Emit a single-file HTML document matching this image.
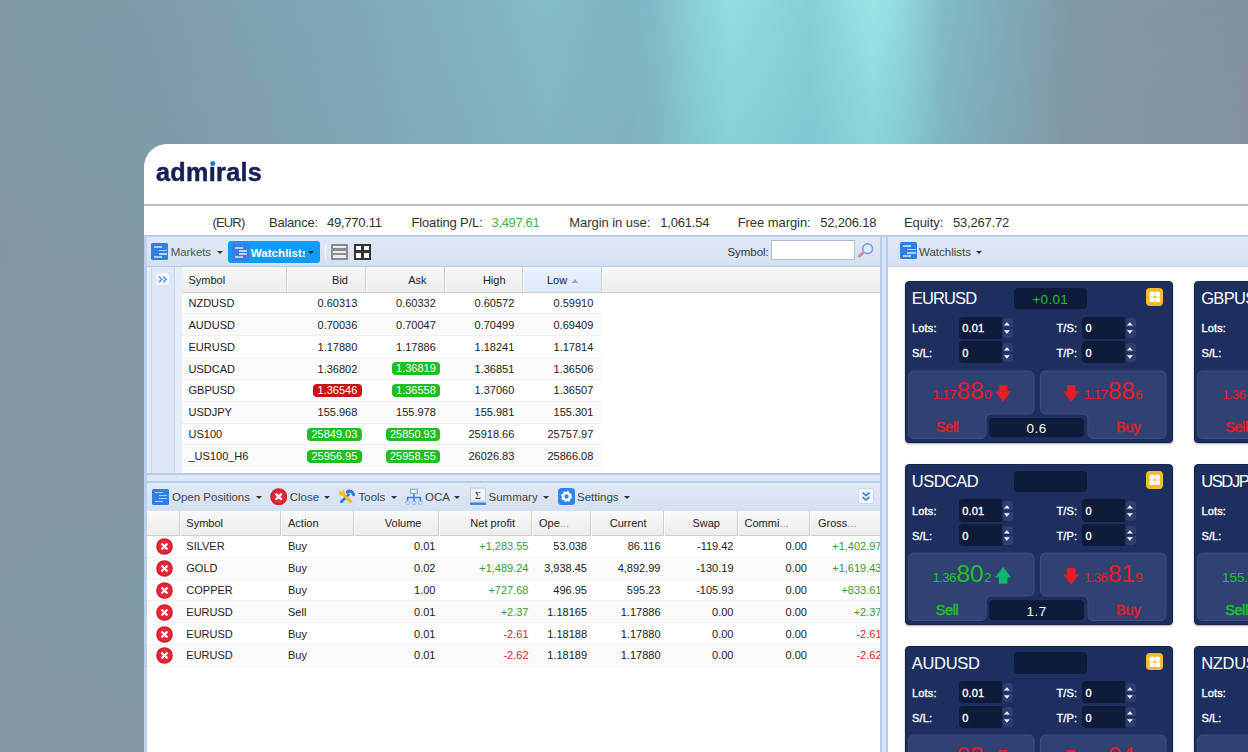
<!DOCTYPE html><html><head><meta charset="utf-8"><title>admirals</title><style>
*{box-sizing:border-box;margin:0;padding:0}
html,body{width:1248px;height:752px;overflow:hidden}
body{position:relative;font-family:"Liberation Sans",Arial,sans-serif;font-size:11px;color:#222;
background:#8098a5}
.abs,.abs *{position:absolute}
.bg{position:absolute;left:0;top:0;width:1248px;height:752px;
background:linear-gradient(90deg,#7f97a5 0px,#7f9dab 150px,#7fa6b5 330px,#82b3c0 470px,#85bcc8 545px,#81b7c4 600px,#80b6c3 630px,#82bcc8 656px,#8bd3d9 698px,#93dee1 729px,#8dd8dc 770px,#86d0d6 810px,#92dde0 845px,#9ae5e6 874px,#93dadf 900px,#82bcc7 944px,#80aebb 990px,#7fa6b3 1024px,#8199a6 1074px,#8395a2 1150px,#83929e 1248px);}
.bgb{position:absolute;left:0;top:0;width:1248px;height:752px;-webkit-mask-image:linear-gradient(180deg,rgba(0,0,0,0) 0px,rgba(0,0,0,1) 150px);mask-image:linear-gradient(180deg,rgba(0,0,0,0) 0px,rgba(0,0,0,1) 150px);
background:linear-gradient(90deg,#8096a3 0px,#7f9aa8 150px,#7fa3b1 330px,#80aebb 470px,#82b5c1 545px,#80b2bf 600px,#7fb1be 630px,#80b6c2 656px,#82c8cf 698px,#85d1d6 729px,#82cdd3 770px,#7fc8cf 810px,#84cfd5 845px,#88d4d9 874px,#84ccd3 900px,#7eb4c0 944px,#7ea8b5 990px,#7fa1ae 1024px,#8197a4 1074px,#8394a0 1150px,#84929e 1248px);}
.bg2{position:absolute;left:0;top:144px;width:400px;height:608px;background:linear-gradient(180deg,rgba(131,148,158,.0) 0px,rgba(131,148,158,.6) 170px,rgba(131,148,158,.6) 330px,rgba(129,151,163,.45) 450px,rgba(131,148,157,.6) 608px)}
.win{position:absolute;left:144px;top:144px;width:1110px;height:620px;background:#fff;border-top-left-radius:23px;overflow:hidden}
.t{position:absolute;white-space:nowrap;line-height:1}
</style></head><body>
<div class="bg"></div><div class="bgb"></div><div class="bg2"></div>
<div class="win" id="win">
<div class="t" style="left:11.5px;top:16px;font-size:25px;color:#171f55;font-weight:bold;letter-spacing:0.35px;-webkit-text-stroke:0.5px #171f55;transform-origin:0 0;transform:scaleX(1.005)">adm<span style="position:relative">ı<span style="position:absolute;left:1.7px;top:2.6px;width:5.2px;height:5.2px;border-radius:50%;background:#1f74ea"></span></span>rals</div>
<div class="" style="position:absolute;left:0.0px;top:60.2px;width:1110.0px;height:1.7px;background:#bfbfbf"></div>
<div class="t" style="left:68.5px;top:71.5px;font-size:13px;color:#333;letter-spacing:-0.842px">(EUR)</div>
<div class="t" style="left:125.0px;top:71.5px;font-size:13px;color:#333;letter-spacing:-0.224px">Balance:</div>
<div class="t" style="left:182.9px;top:71.5px;font-size:13px;color:#333;letter-spacing:-0.219px">49,770.11</div>
<div class="t" style="left:267.4px;top:71.5px;font-size:13px;color:#333;letter-spacing:-0.130px">Floating P/L:</div>
<div class="t" style="left:347.5px;top:71.5px;font-size:13px;color:#3db54a;letter-spacing:-0.351px">3,497.61</div>
<div class="t" style="left:425.2px;top:71.5px;font-size:13px;color:#333;letter-spacing:-0.040px">Margin in use:</div>
<div class="t" style="left:516.3px;top:71.5px;font-size:13px;color:#333;letter-spacing:-0.201px">1,061.54</div>
<div class="t" style="left:593.7px;top:71.5px;font-size:13px;color:#333;letter-spacing:-0.066px">Free margin:</div>
<div class="t" style="left:676.2px;top:71.5px;font-size:13px;color:#333;letter-spacing:-0.193px">52,206.18</div>
<div class="t" style="left:759.9px;top:71.5px;font-size:13px;color:#333;letter-spacing:-0.049px">Equity:</div>
<div class="t" style="left:808.9px;top:71.5px;font-size:13px;color:#333;letter-spacing:-0.193px">53,267.72</div>
<div class="" style="position:absolute;left:0.0px;top:91.0px;width:744.0px;height:520.0px;background:#e5edf9"></div>
<div class="" style="position:absolute;left:0.0px;top:91.0px;width:1110.0px;height:2.0px;background:#b4cdee"></div>
<div class="" style="position:absolute;left:0.0px;top:93.0px;width:2.5px;height:520.0px;background:#bdd1ee"></div>
<div class="" style="position:absolute;left:735.5px;top:93.0px;width:2.5px;height:520.0px;background:#b4cdee"></div>
<div class="" style="position:absolute;left:738.0px;top:93.0px;width:4.0px;height:520.0px;background:#dce7f6"></div>
<div class="" style="position:absolute;left:742.0px;top:93.0px;width:2.0px;height:520.0px;background:#b4cdee"></div>
<div class="" style="position:absolute;left:3.0px;top:93.0px;width:732.5px;height:28.5px;background:linear-gradient(180deg,#e0e9f6 0%,#d4e0f1 100%)"></div>
<div class="" style="position:absolute;left:3.0px;top:121.5px;width:732.5px;height:1.5px;background:#b4cdee"></div>
<div class="" style="position:absolute;left:7.4px;top:99.3px;width:17.0px;height:17.0px;background:#2f7fe4;border-radius:1.5px"><div style="position:absolute;left:3.0px;top:3.2px;width:8.0px;height:1.7px;background:rgba(255,255,255,.62)"></div><div style="position:absolute;left:7.2px;top:6.4px;width:8.4px;height:1.7px;background:rgba(255,255,255,.62)"></div><div style="position:absolute;left:7.2px;top:9.6px;width:8.4px;height:1.7px;background:rgba(255,255,255,.62)"></div><div style="position:absolute;left:3.0px;top:12.8px;width:8.0px;height:1.7px;background:rgba(255,255,255,.62)"></div></div>
<div class="t" style="left:26.8px;top:102.8px;font-size:11.5px;color:#555;letter-spacing:-0.100px">Markets</div>
<div class="" style="position:absolute;left:72.5px;top:107.0px;width:0.0px;height:0.0px;border-left:3px solid transparent;border-right:3px solid transparent;border-top:3.5px solid #333;width:0;height:0"></div>
<div class="" style="position:absolute;left:84.0px;top:96.5px;width:91.5px;height:22.5px;background:#109bf6;border-radius:3px"></div>
<div class="" style="position:absolute;left:88.0px;top:100.0px;width:16.5px;height:16.5px;background:#3b7ee2;border-radius:1.5px"><div style="position:absolute;left:2.9px;top:3.1px;width:7.8px;height:1.6px;background:rgba(255,255,255,.62)"></div><div style="position:absolute;left:7.0px;top:6.2px;width:8.2px;height:1.6px;background:rgba(255,255,255,.62)"></div><div style="position:absolute;left:7.0px;top:9.3px;width:8.2px;height:1.6px;background:rgba(255,255,255,.62)"></div><div style="position:absolute;left:2.9px;top:12.4px;width:7.8px;height:1.6px;background:rgba(255,255,255,.62)"></div></div>
<div class="t" style="left:106.80000000000001px;top:103px;width:54.3px;overflow:hidden;font-size:11.6px;font-weight:bold;color:#fff">Watchlists</div>
<div class="" style="position:absolute;left:163.5px;top:107.0px;width:0.0px;height:0.0px;border-left:3px solid transparent;border-right:3px solid transparent;border-top:3.5px solid #1b2a4a;width:0;height:0"></div>
<div class="" style="position:absolute;left:180.5px;top:100.0px;width:1.0px;height:16.0px;background:#f4f8fd"></div>
<div class="" style="position:absolute;left:186.5px;top:99.8px;width:17.0px;height:16.0px;border:2.2px solid #8c8c8c;background:#e9edf2"><div style="position:absolute;left:0;right:0;top:2.6px;height:2.2px;background:#8c8c8c"></div><div style="position:absolute;left:0;right:0;top:7.2px;height:2.2px;background:#8c8c8c"></div></div>
<div class="" style="position:absolute;left:210.3px;top:99.8px;width:17.0px;height:16.0px;border:2.4px solid #343434;background:#fff"><div style="position:absolute;left:4.9px;top:0;bottom:0;width:2.4px;background:#343434"></div><div style="position:absolute;left:0;right:0;top:4.4px;height:2.4px;background:#343434"></div></div>
<div class="t" style="left:583.5px;top:102.8px;font-size:11.5px;color:#333;letter-spacing:-0.049px">Symbol:</div>
<div class="" style="position:absolute;left:626.5px;top:96.3px;width:84.0px;height:19.7px;background:#fff;border:1px solid #b4c0d2;border-top-color:#a9b6cb"></div>
<svg style="position:absolute;left:712px;top:97px" width="20" height="19" viewBox="0 0 20 19"><path d="M3.4 15.1 L7 11.9" stroke="#cf8ea3" stroke-width="2.8" stroke-linecap="round"/><circle cx="11.6" cy="7.8" r="4.9" fill="#d6f2fb" stroke="#9097e6" stroke-width="1.7"/></svg>
<div class="" style="position:absolute;left:7.0px;top:123.0px;width:23.5px;height:206.0px;background:#dce6f5;border-left:1.5px solid #c6d7ef;border-right:1.5px solid #c6d7ef"></div>
<div class="" style="position:absolute;left:12.3px;top:128.7px;width:13.0px;height:12.5px;background:#f4f8fd;border-radius:2px"></div>
<svg style="position:absolute;left:14.300000000000011px;top:131.8px" width="10" height="7" viewBox="0 0 10 7"><path d="M0.9 0.6 L3.9 3.4 L0.9 6.2 M5.2 0.6 L8.2 3.4 L5.2 6.2" fill="none" stroke="#6a98d8" stroke-width="1.6"/></svg>
<div class="" style="position:absolute;left:38.0px;top:123.0px;width:697.5px;height:206.0px;background:#fff"></div>
<div class="" style="position:absolute;left:38.0px;top:123.0px;width:697.5px;height:25.5px;background:linear-gradient(180deg,#f9f9f9 0%,#ececec 100%);border-bottom:1px solid #d0d0d0"></div>
<div class="" style="position:absolute;left:379.0px;top:123.0px;width:79.0px;height:25.0px;background:linear-gradient(180deg,#ebf3fd,#d9e8fb)"></div>
<div class="" style="position:absolute;left:142.0px;top:123.0px;width:1.0px;height:25.0px;background:#d0d0d0"></div>
<div class="" style="position:absolute;left:143.0px;top:123.0px;width:1.0px;height:25.0px;background:#fbfbfb"></div>
<div class="" style="position:absolute;left:221.0px;top:123.0px;width:1.0px;height:25.0px;background:#d0d0d0"></div>
<div class="" style="position:absolute;left:222.0px;top:123.0px;width:1.0px;height:25.0px;background:#fbfbfb"></div>
<div class="" style="position:absolute;left:299.5px;top:123.0px;width:1.0px;height:25.0px;background:#d0d0d0"></div>
<div class="" style="position:absolute;left:300.5px;top:123.0px;width:1.0px;height:25.0px;background:#fbfbfb"></div>
<div class="" style="position:absolute;left:378.0px;top:123.0px;width:1.0px;height:25.0px;background:#d0d0d0"></div>
<div class="" style="position:absolute;left:379.0px;top:123.0px;width:1.0px;height:25.0px;background:#fbfbfb"></div>
<div class="" style="position:absolute;left:457.0px;top:123.0px;width:1.0px;height:25.0px;background:#d0d0d0"></div>
<div class="" style="position:absolute;left:458.0px;top:123.0px;width:1.0px;height:25.0px;background:#fbfbfb"></div>
<div class="t" style="left:44.5px;top:130.5px;font-size:11px;color:#222;">Symbol</div>
<div class="t" style="right:906.0px;top:130.5px;font-size:11px;color:#222;">Bid</div>
<div class="t" style="right:827.5px;top:130.5px;font-size:11px;color:#222;">Ask</div>
<div class="t" style="right:748.5px;top:130.5px;font-size:11px;color:#222;">High</div>
<div class="t" style="left:403.0px;top:130.5px;font-size:11px;color:#222;">Low</div>
<div class="" style="position:absolute;left:427.5px;top:135.0px;width:0.0px;height:0.0px;border-left:3.5px solid transparent;border-right:3.5px solid transparent;border-bottom:4px solid #8fa6c9;width:0;height:0"></div>
<div class="" style="position:absolute;left:38.0px;top:148.5px;width:420.0px;height:21.9px;background:#fff;border-bottom:1px solid #f0f0f0"></div>
<div class="t" style="left:44.5px;top:154.0px;font-size:11px;color:#222;">NZDUSD</div>
<div class="t" style="right:896.7px;top:154.0px;font-size:11px;color:#222;">0.60313</div>
<div class="t" style="right:818.2px;top:154.0px;font-size:11px;color:#222;">0.60332</div>
<div class="t" style="right:739.7px;top:154.0px;font-size:11px;color:#222;">0.60572</div>
<div class="t" style="right:660.7px;top:154.0px;font-size:11px;color:#222;">0.59910</div>
<div class="" style="position:absolute;left:38.0px;top:170.4px;width:420.0px;height:21.9px;background:#fafafa;border-bottom:1px solid #f0f0f0"></div>
<div class="t" style="left:44.5px;top:175.9px;font-size:11px;color:#222;">AUDUSD</div>
<div class="t" style="right:896.7px;top:175.9px;font-size:11px;color:#222;">0.70036</div>
<div class="t" style="right:818.2px;top:175.9px;font-size:11px;color:#222;">0.70047</div>
<div class="t" style="right:739.7px;top:175.9px;font-size:11px;color:#222;">0.70499</div>
<div class="t" style="right:660.7px;top:175.9px;font-size:11px;color:#222;">0.69409</div>
<div class="" style="position:absolute;left:38.0px;top:192.2px;width:420.0px;height:21.9px;background:#fff;border-bottom:1px solid #f0f0f0"></div>
<div class="t" style="left:44.5px;top:197.7px;font-size:11px;color:#222;">EURUSD</div>
<div class="t" style="right:896.7px;top:197.7px;font-size:11px;color:#222;">1.17880</div>
<div class="t" style="right:818.2px;top:197.7px;font-size:11px;color:#222;">1.17886</div>
<div class="t" style="right:739.7px;top:197.7px;font-size:11px;color:#222;">1.18241</div>
<div class="t" style="right:660.7px;top:197.7px;font-size:11px;color:#222;">1.17814</div>
<div class="" style="position:absolute;left:38.0px;top:214.1px;width:420.0px;height:21.9px;background:#fafafa;border-bottom:1px solid #f0f0f0"></div>
<div class="t" style="left:44.5px;top:219.6px;font-size:11px;color:#222;">USDCAD</div>
<div class="t" style="right:896.7px;top:219.6px;font-size:11px;color:#222;">1.36802</div>
<div class="t" style="right:814.0px;top:218.2px;font-size:11px;color:#fff;background:#21be21;border-radius:4px;padding:1px 4.2px 1px 4.2px;height:13px">1.36819</div>
<div class="t" style="right:739.7px;top:219.6px;font-size:11px;color:#222;">1.36851</div>
<div class="t" style="right:660.7px;top:219.6px;font-size:11px;color:#222;">1.36506</div>
<div class="" style="position:absolute;left:38.0px;top:235.9px;width:420.0px;height:21.9px;background:#fff;border-bottom:1px solid #f0f0f0"></div>
<div class="t" style="left:44.5px;top:241.4px;font-size:11px;color:#222;">GBPUSD</div>
<div class="t" style="right:892.5px;top:240.1px;font-size:11px;color:#fff;background:#c41616;border-radius:4px;padding:1px 4.2px 1px 4.2px;height:13px">1.36546</div>
<div class="t" style="right:814.0px;top:240.1px;font-size:11px;color:#fff;background:#21be21;border-radius:4px;padding:1px 4.2px 1px 4.2px;height:13px">1.36558</div>
<div class="t" style="right:739.7px;top:241.4px;font-size:11px;color:#222;">1.37060</div>
<div class="t" style="right:660.7px;top:241.4px;font-size:11px;color:#222;">1.36507</div>
<div class="" style="position:absolute;left:38.0px;top:257.8px;width:420.0px;height:21.9px;background:#fafafa;border-bottom:1px solid #f0f0f0"></div>
<div class="t" style="left:44.5px;top:263.2px;font-size:11px;color:#222;">USDJPY</div>
<div class="t" style="right:896.7px;top:263.2px;font-size:11px;color:#222;">155.968</div>
<div class="t" style="right:818.2px;top:263.2px;font-size:11px;color:#222;">155.978</div>
<div class="t" style="right:739.7px;top:263.2px;font-size:11px;color:#222;">155.981</div>
<div class="t" style="right:660.7px;top:263.2px;font-size:11px;color:#222;">155.301</div>
<div class="" style="position:absolute;left:38.0px;top:279.6px;width:420.0px;height:21.9px;background:#fff;border-bottom:1px solid #f0f0f0"></div>
<div class="t" style="left:44.5px;top:285.1px;font-size:11px;color:#222;">US100</div>
<div class="t" style="right:892.5px;top:283.8px;font-size:11px;color:#fff;background:#21be21;border-radius:4px;padding:1px 4.2px 1px 4.2px;height:13px">25849.03</div>
<div class="t" style="right:814.0px;top:283.8px;font-size:11px;color:#fff;background:#21be21;border-radius:4px;padding:1px 4.2px 1px 4.2px;height:13px">25850.93</div>
<div class="t" style="right:739.7px;top:285.1px;font-size:11px;color:#222;">25918.66</div>
<div class="t" style="right:660.7px;top:285.1px;font-size:11px;color:#222;">25757.97</div>
<div class="" style="position:absolute;left:38.0px;top:301.5px;width:420.0px;height:21.9px;background:#fafafa;border-bottom:1px solid #f0f0f0"></div>
<div class="t" style="left:44.5px;top:307.0px;font-size:11px;color:#222;">_US100_H6</div>
<div class="t" style="right:892.5px;top:305.7px;font-size:11px;color:#fff;background:#21be21;border-radius:4px;padding:1px 4.2px 1px 4.2px;height:13px">25956.95</div>
<div class="t" style="right:814.0px;top:305.7px;font-size:11px;color:#fff;background:#21be21;border-radius:4px;padding:1px 4.2px 1px 4.2px;height:13px">25958.55</div>
<div class="t" style="right:739.7px;top:307.0px;font-size:11px;color:#222;">26026.83</div>
<div class="t" style="right:660.7px;top:307.0px;font-size:11px;color:#222;">25866.08</div>
<div class="" style="position:absolute;left:3.0px;top:329.0px;width:732.5px;height:1.5px;background:#b4cdee"></div>
<div class="" style="position:absolute;left:3.0px;top:330.5px;width:732.5px;height:6.0px;background:#dce7f6"></div>
<div class="" style="position:absolute;left:3.0px;top:336.5px;width:732.5px;height:2.0px;background:#b4cdee"></div>
<div class="" style="position:absolute;left:3.0px;top:338.5px;width:732.5px;height:28.0px;background:linear-gradient(180deg,#e0e9f6 0%,#d4e0f1 100%)"></div>
<div class="" style="position:absolute;left:8.0px;top:344.5px;width:16.5px;height:16.5px;background:#2f7fe4;border-radius:1.5px"><div style="position:absolute;left:2.9px;top:3.1px;width:7.8px;height:1.6px;background:rgba(255,255,255,.62)"></div><div style="position:absolute;left:7.0px;top:6.2px;width:8.2px;height:1.6px;background:rgba(255,255,255,.62)"></div><div style="position:absolute;left:7.0px;top:9.3px;width:8.2px;height:1.6px;background:rgba(255,255,255,.62)"></div><div style="position:absolute;left:2.9px;top:12.4px;width:7.8px;height:1.6px;background:rgba(255,255,255,.62)"></div></div>
<div class="t" style="left:28.0px;top:347.5px;font-size:11.5px;color:#444;">Open Positions</div>
<div class="" style="position:absolute;left:111.5px;top:351.5px;width:0.0px;height:0.0px;border-left:3px solid transparent;border-right:3px solid transparent;border-top:3.5px solid #333;width:0;height:0"></div>
<svg style="position:absolute;left:126.0px;top:344.0px" width="17.4" height="17.4" viewBox="0 0 20 20"><circle cx="10" cy="10" r="9.8" fill="#d71f2e"/><circle cx="10" cy="10" r="7.6" fill="#e22b39"/><path d="M7.3 7.3 L12.7 12.7 M12.7 7.3 L7.3 12.7" stroke="#fff" stroke-width="2.7" stroke-linecap="round"/></svg>
<div class="t" style="left:145.7px;top:347.5px;font-size:11.5px;color:#444;">Close</div>
<div class="" style="position:absolute;left:179.5px;top:351.5px;width:0.0px;height:0.0px;border-left:3px solid transparent;border-right:3px solid transparent;border-top:3.5px solid #333;width:0;height:0"></div>
<svg style="position:absolute;left:194px;top:344px" width="17" height="17" viewBox="0 0 17 17"><path d="M3.4 13.8 L10.6 6.6" stroke="#2f76de" stroke-width="2.7" stroke-linecap="round"/><path d="M9.4 3.9 Q13.6 1.6 15.6 6.6" fill="none" stroke="#2f76de" stroke-width="3.1" stroke-linecap="round"/><path d="M4 5 L12.6 13.6" stroke="#f6b71e" stroke-width="2.9" stroke-linecap="round"/><circle cx="3.9" cy="4.7" r="3" fill="#f8c02a"/><circle cx="3.2" cy="2.6" r="1.1" fill="#dfe8f5"/></svg>
<div class="t" style="left:214.5px;top:347.5px;font-size:11.5px;color:#444;">Tools</div>
<div class="" style="position:absolute;left:246.8px;top:351.5px;width:0.0px;height:0.0px;border-left:3px solid transparent;border-right:3px solid transparent;border-top:3.5px solid #333;width:0;height:0"></div>
<svg style="position:absolute;left:261px;top:343.5px" width="18" height="18" viewBox="0 0 18 18"><rect x="5.6" y="1.2" width="6.8" height="4.2" fill="#e8f1fc" stroke="#78a8ea" stroke-width="1.1"/><path d="M9 5.6 V9.6 M2.6 13.2 V9.6 H15.4 V13.2 M9 9.6 V13.2" fill="none" stroke="#3c80e4" stroke-width="1.5"/><rect x="0.9" y="13.4" width="3.4" height="2.8" fill="#e8f1fc" stroke="#8fb6ee" stroke-width="0.9"/><rect x="7.3" y="13.4" width="3.4" height="2.8" fill="#e8f1fc" stroke="#8fb6ee" stroke-width="0.9"/><rect x="13.7" y="13.4" width="3.4" height="2.8" fill="#e8f1fc" stroke="#8fb6ee" stroke-width="0.9"/></svg>
<div class="t" style="left:281.0px;top:347.5px;font-size:11.5px;color:#444;">OCA</div>
<div class="" style="position:absolute;left:310.0px;top:351.5px;width:0.0px;height:0.0px;border-left:3px solid transparent;border-right:3px solid transparent;border-top:3.5px solid #333;width:0;height:0"></div>
<svg style="position:absolute;left:325px;top:343px" width="18" height="19" viewBox="0 0 18 19"><rect x="1.5" y="1" width="15" height="13" fill="#eef1f5" stroke="#c4ccd8" stroke-width="1"/><text x="9" y="11.5" font-size="10" text-anchor="middle" fill="#333" font-family="Liberation Serif,serif">Σ</text><rect x="1" y="15.5" width="16" height="2.4" fill="#3b7ee2"/></svg>
<div class="t" style="left:344.5px;top:347.5px;font-size:11.5px;color:#444;">Summary</div>
<div class="" style="position:absolute;left:399.0px;top:351.5px;width:0.0px;height:0.0px;border-left:3px solid transparent;border-right:3px solid transparent;border-top:3.5px solid #333;width:0;height:0"></div>
<svg style="position:absolute;left:413.5px;top:344px" width="17" height="17" viewBox="0 0 17 17"><rect width="17" height="17" rx="3.5" fill="#2f86ea"/><circle cx="8.5" cy="8.5" r="3.4" fill="none" stroke="#fff" stroke-width="2.5"/><circle cx="8.5" cy="8.5" r="4.9" fill="none" stroke="#fff" stroke-width="1.3" stroke-dasharray="1.9 1.95"/></svg>
<div class="t" style="left:433.0px;top:347.5px;font-size:11.5px;color:#444;">Settings</div>
<div class="" style="position:absolute;left:479.5px;top:351.5px;width:0.0px;height:0.0px;border-left:3px solid transparent;border-right:3px solid transparent;border-top:3.5px solid #333;width:0;height:0"></div>
<div class="" style="position:absolute;left:713.5px;top:344.0px;width:16.0px;height:16.0px;background:#f4f8fd;border:1px solid #c7d8f0;border-radius:2px"></div>
<svg style="position:absolute;left:716.5px;top:346.5px" width="10" height="11" viewBox="0 0 10 11"><path d="M1.5 1.5 L5 4.5 L8.5 1.5 M1.5 6 L5 9 L8.5 6" fill="none" stroke="#4f86d6" stroke-width="1.8"/></svg>
<div class="" style="position:absolute;left:3.0px;top:366.5px;width:732.5px;height:250.0px;background:#fff"></div>
<div class="" style="position:absolute;left:3.0px;top:366.5px;width:732.5px;height:25.5px;background:linear-gradient(180deg,#f9f9f9 0%,#ececec 100%);border-bottom:1px solid #d0d0d0"></div>
<div class="" style="position:absolute;left:35.0px;top:366.5px;width:1.0px;height:25.0px;background:#d0d0d0"></div>
<div class="" style="position:absolute;left:36.0px;top:366.5px;width:1.0px;height:25.0px;background:#fbfbfb"></div>
<div class="" style="position:absolute;left:135.5px;top:366.5px;width:1.0px;height:25.0px;background:#d0d0d0"></div>
<div class="" style="position:absolute;left:136.5px;top:366.5px;width:1.0px;height:25.0px;background:#fbfbfb"></div>
<div class="" style="position:absolute;left:209.0px;top:366.5px;width:1.0px;height:25.0px;background:#d0d0d0"></div>
<div class="" style="position:absolute;left:210.0px;top:366.5px;width:1.0px;height:25.0px;background:#fbfbfb"></div>
<div class="" style="position:absolute;left:294.0px;top:366.5px;width:1.0px;height:25.0px;background:#d0d0d0"></div>
<div class="" style="position:absolute;left:295.0px;top:366.5px;width:1.0px;height:25.0px;background:#fbfbfb"></div>
<div class="" style="position:absolute;left:387.0px;top:366.5px;width:1.0px;height:25.0px;background:#d0d0d0"></div>
<div class="" style="position:absolute;left:388.0px;top:366.5px;width:1.0px;height:25.0px;background:#fbfbfb"></div>
<div class="" style="position:absolute;left:445.5px;top:366.5px;width:1.0px;height:25.0px;background:#d0d0d0"></div>
<div class="" style="position:absolute;left:446.5px;top:366.5px;width:1.0px;height:25.0px;background:#fbfbfb"></div>
<div class="" style="position:absolute;left:519.0px;top:366.5px;width:1.0px;height:25.0px;background:#d0d0d0"></div>
<div class="" style="position:absolute;left:520.0px;top:366.5px;width:1.0px;height:25.0px;background:#fbfbfb"></div>
<div class="" style="position:absolute;left:592.5px;top:366.5px;width:1.0px;height:25.0px;background:#d0d0d0"></div>
<div class="" style="position:absolute;left:593.5px;top:366.5px;width:1.0px;height:25.0px;background:#fbfbfb"></div>
<div class="" style="position:absolute;left:665.0px;top:366.5px;width:1.0px;height:25.0px;background:#d0d0d0"></div>
<div class="" style="position:absolute;left:666.0px;top:366.5px;width:1.0px;height:25.0px;background:#fbfbfb"></div>
<div class="t" style="left:42.3px;top:374.3px;font-size:11px;color:#222;">Symbol</div>
<div class="t" style="left:144.0px;top:374.3px;font-size:11px;color:#222;">Action</div>
<div class="t" style="right:832.5px;top:374.3px;font-size:11px;color:#222;">Volume</div>
<div class="t" style="right:739.0px;top:374.3px;font-size:11px;color:#222;">Net profit</div>
<div class="t" style="left:395.0px;top:374.3px;font-size:11px;color:#222;">Ope<span style="color:#999">...</span></div>
<div class="t" style="right:607.5px;top:374.3px;font-size:11px;color:#222;">Current</div>
<div class="t" style="right:534.0px;top:374.3px;font-size:11px;color:#222;">Swap</div>
<div class="t" style="left:600.5px;top:374.3px;font-size:11px;color:#222;">Commi<span style="color:#999">...</span></div>
<div class="t" style="left:674.0px;top:374.3px;font-size:11px;color:#222;">Gross<span style="color:#999">...</span></div>
<div class="" style="position:absolute;left:3.0px;top:392.0px;width:732.5px;height:21.8px;background:#fff;border-bottom:1px solid #f4f4f4"></div>
<svg style="position:absolute;left:11.8px;top:394.3px" width="17.0" height="17.0" viewBox="0 0 20 20"><circle cx="10" cy="10" r="9.8" fill="#d71f2e"/><circle cx="10" cy="10" r="7.6" fill="#e22b39"/><path d="M7.3 7.3 L12.7 12.7 M12.7 7.3 L7.3 12.7" stroke="#fff" stroke-width="2.7" stroke-linecap="round"/></svg>
<div class="t" style="left:42.3px;top:397.4px;font-size:11px;color:#222;">SILVER</div>
<div class="t" style="left:144.0px;top:397.4px;font-size:11px;color:#222;">Buy</div>
<div class="t" style="right:818.5px;top:397.4px;font-size:11px;color:#222;">0.01</div>
<div class="t" style="right:725.5px;top:397.4px;font-size:11px;color:#3a9b3a;">+1,283.55</div>
<div class="t" style="right:667.0px;top:397.4px;font-size:11px;color:#222;">53.038</div>
<div class="t" style="right:593.5px;top:397.4px;font-size:11px;color:#222;">86.116</div>
<div class="t" style="right:520.5px;top:397.4px;font-size:11px;color:#222;">-119.42</div>
<div class="t" style="right:447.0px;top:397.4px;font-size:11px;color:#222;">0.00</div>
<div class="t" style="right:372.5px;top:397.4px;font-size:11px;color:#3a9b3a;">+1,402.97</div>
<div class="" style="position:absolute;left:3.0px;top:413.8px;width:732.5px;height:21.8px;background:#fafafa;border-bottom:1px solid #f4f4f4"></div>
<svg style="position:absolute;left:11.8px;top:416.1px" width="17.0" height="17.0" viewBox="0 0 20 20"><circle cx="10" cy="10" r="9.8" fill="#d71f2e"/><circle cx="10" cy="10" r="7.6" fill="#e22b39"/><path d="M7.3 7.3 L12.7 12.7 M12.7 7.3 L7.3 12.7" stroke="#fff" stroke-width="2.7" stroke-linecap="round"/></svg>
<div class="t" style="left:42.3px;top:419.2px;font-size:11px;color:#222;">GOLD</div>
<div class="t" style="left:144.0px;top:419.2px;font-size:11px;color:#222;">Buy</div>
<div class="t" style="right:818.5px;top:419.2px;font-size:11px;color:#222;">0.02</div>
<div class="t" style="right:725.5px;top:419.2px;font-size:11px;color:#3a9b3a;">+1,489.24</div>
<div class="t" style="right:667.0px;top:419.2px;font-size:11px;color:#222;">3,938.45</div>
<div class="t" style="right:593.5px;top:419.2px;font-size:11px;color:#222;">4,892.99</div>
<div class="t" style="right:520.5px;top:419.2px;font-size:11px;color:#222;">-130.19</div>
<div class="t" style="right:447.0px;top:419.2px;font-size:11px;color:#222;">0.00</div>
<div class="t" style="right:372.5px;top:419.2px;font-size:11px;color:#3a9b3a;">+1,619.43</div>
<div class="" style="position:absolute;left:3.0px;top:435.6px;width:732.5px;height:21.8px;background:#fff;border-bottom:1px solid #f4f4f4"></div>
<svg style="position:absolute;left:11.8px;top:437.9px" width="17.0" height="17.0" viewBox="0 0 20 20"><circle cx="10" cy="10" r="9.8" fill="#d71f2e"/><circle cx="10" cy="10" r="7.6" fill="#e22b39"/><path d="M7.3 7.3 L12.7 12.7 M12.7 7.3 L7.3 12.7" stroke="#fff" stroke-width="2.7" stroke-linecap="round"/></svg>
<div class="t" style="left:42.3px;top:441.0px;font-size:11px;color:#222;">COPPER</div>
<div class="t" style="left:144.0px;top:441.0px;font-size:11px;color:#222;">Buy</div>
<div class="t" style="right:818.5px;top:441.0px;font-size:11px;color:#222;">1.00</div>
<div class="t" style="right:725.5px;top:441.0px;font-size:11px;color:#3a9b3a;">+727.68</div>
<div class="t" style="right:667.0px;top:441.0px;font-size:11px;color:#222;">496.95</div>
<div class="t" style="right:593.5px;top:441.0px;font-size:11px;color:#222;">595.23</div>
<div class="t" style="right:520.5px;top:441.0px;font-size:11px;color:#222;">-105.93</div>
<div class="t" style="right:447.0px;top:441.0px;font-size:11px;color:#222;">0.00</div>
<div class="t" style="right:372.5px;top:441.0px;font-size:11px;color:#3a9b3a;">+833.61</div>
<div class="" style="position:absolute;left:3.0px;top:457.4px;width:732.5px;height:21.8px;background:#fafafa;border-bottom:1px solid #f4f4f4"></div>
<svg style="position:absolute;left:11.8px;top:459.7px" width="17.0" height="17.0" viewBox="0 0 20 20"><circle cx="10" cy="10" r="9.8" fill="#d71f2e"/><circle cx="10" cy="10" r="7.6" fill="#e22b39"/><path d="M7.3 7.3 L12.7 12.7 M12.7 7.3 L7.3 12.7" stroke="#fff" stroke-width="2.7" stroke-linecap="round"/></svg>
<div class="t" style="left:42.3px;top:462.8px;font-size:11px;color:#222;">EURUSD</div>
<div class="t" style="left:144.0px;top:462.8px;font-size:11px;color:#222;">Sell</div>
<div class="t" style="right:818.5px;top:462.8px;font-size:11px;color:#222;">0.01</div>
<div class="t" style="right:725.5px;top:462.8px;font-size:11px;color:#3a9b3a;">+2.37</div>
<div class="t" style="right:667.0px;top:462.8px;font-size:11px;color:#222;">1.18165</div>
<div class="t" style="right:593.5px;top:462.8px;font-size:11px;color:#222;">1.17886</div>
<div class="t" style="right:520.5px;top:462.8px;font-size:11px;color:#222;">0.00</div>
<div class="t" style="right:447.0px;top:462.8px;font-size:11px;color:#222;">0.00</div>
<div class="t" style="right:372.5px;top:462.8px;font-size:11px;color:#3a9b3a;">+2.37</div>
<div class="" style="position:absolute;left:3.0px;top:479.2px;width:732.5px;height:21.8px;background:#fff;border-bottom:1px solid #f4f4f4"></div>
<svg style="position:absolute;left:11.8px;top:481.5px" width="17.0" height="17.0" viewBox="0 0 20 20"><circle cx="10" cy="10" r="9.8" fill="#d71f2e"/><circle cx="10" cy="10" r="7.6" fill="#e22b39"/><path d="M7.3 7.3 L12.7 12.7 M12.7 7.3 L7.3 12.7" stroke="#fff" stroke-width="2.7" stroke-linecap="round"/></svg>
<div class="t" style="left:42.3px;top:484.6px;font-size:11px;color:#222;">EURUSD</div>
<div class="t" style="left:144.0px;top:484.6px;font-size:11px;color:#222;">Buy</div>
<div class="t" style="right:818.5px;top:484.6px;font-size:11px;color:#222;">0.01</div>
<div class="t" style="right:725.5px;top:484.6px;font-size:11px;color:#d42a2a;">-2.61</div>
<div class="t" style="right:667.0px;top:484.6px;font-size:11px;color:#222;">1.18188</div>
<div class="t" style="right:593.5px;top:484.6px;font-size:11px;color:#222;">1.17880</div>
<div class="t" style="right:520.5px;top:484.6px;font-size:11px;color:#222;">0.00</div>
<div class="t" style="right:447.0px;top:484.6px;font-size:11px;color:#222;">0.00</div>
<div class="t" style="right:372.5px;top:484.6px;font-size:11px;color:#d42a2a;">-2.61</div>
<div class="" style="position:absolute;left:3.0px;top:501.0px;width:732.5px;height:21.8px;background:#fafafa;border-bottom:1px solid #f4f4f4"></div>
<svg style="position:absolute;left:11.8px;top:503.3px" width="17.0" height="17.0" viewBox="0 0 20 20"><circle cx="10" cy="10" r="9.8" fill="#d71f2e"/><circle cx="10" cy="10" r="7.6" fill="#e22b39"/><path d="M7.3 7.3 L12.7 12.7 M12.7 7.3 L7.3 12.7" stroke="#fff" stroke-width="2.7" stroke-linecap="round"/></svg>
<div class="t" style="left:42.3px;top:506.4px;font-size:11px;color:#222;">EURUSD</div>
<div class="t" style="left:144.0px;top:506.4px;font-size:11px;color:#222;">Buy</div>
<div class="t" style="right:818.5px;top:506.4px;font-size:11px;color:#222;">0.01</div>
<div class="t" style="right:725.5px;top:506.4px;font-size:11px;color:#d42a2a;">-2.62</div>
<div class="t" style="right:667.0px;top:506.4px;font-size:11px;color:#222;">1.18189</div>
<div class="t" style="right:593.5px;top:506.4px;font-size:11px;color:#222;">1.17880</div>
<div class="t" style="right:520.5px;top:506.4px;font-size:11px;color:#222;">0.00</div>
<div class="t" style="right:447.0px;top:506.4px;font-size:11px;color:#222;">0.00</div>
<div class="t" style="right:372.5px;top:506.4px;font-size:11px;color:#d42a2a;">-2.62</div>
<div class="" style="position:absolute;left:735.5px;top:338.5px;width:2.5px;height:280.0px;background:#b4cdee"></div>
<div class="" style="position:absolute;left:744.0px;top:93.0px;width:370.0px;height:28.5px;background:linear-gradient(180deg,#e0e9f6 0%,#d4e0f1 100%)"></div>
<div class="" style="position:absolute;left:744.0px;top:121.5px;width:370.0px;height:1.0px;background:#c9daf2"></div>
<div class="" style="position:absolute;left:744.0px;top:122.5px;width:370.0px;height:500.0px;background:#fff"></div>
<div class="" style="position:absolute;left:756.0px;top:98.3px;width:17.0px;height:17.0px;background:#2f7fe4;border-radius:1.5px"><div style="position:absolute;left:3.0px;top:3.2px;width:8.0px;height:1.7px;background:rgba(255,255,255,.62)"></div><div style="position:absolute;left:7.2px;top:6.4px;width:8.4px;height:1.7px;background:rgba(255,255,255,.62)"></div><div style="position:absolute;left:7.2px;top:9.6px;width:8.4px;height:1.7px;background:rgba(255,255,255,.62)"></div><div style="position:absolute;left:3.0px;top:12.8px;width:8.0px;height:1.7px;background:rgba(255,255,255,.62)"></div></div>
<div class="t" style="left:775.0px;top:103.0px;font-size:11.5px;color:#444;">Watchlists</div>
<div class="" style="position:absolute;left:832.0px;top:107.0px;width:0.0px;height:0.0px;border-left:3px solid transparent;border-right:3px solid transparent;border-top:3.5px solid #333;width:0;height:0"></div>
<div style="position:absolute;left:760.5px;top:137.0px;width:268px;height:161.5px;background:#1d2f5f;border:1.5px solid #15234a;border-radius:4px;box-shadow:0 1px 2px rgba(0,0,0,.35);font-family:'Liberation Sans',sans-serif">
<div class="t" style="left:6.3px;top:8.4px;font-size:16.5px;color:#fff;letter-spacing:-0.863px">EURUSD</div>
<div style="position:absolute;left:108.5px;top:5.8px;width:72.5px;height:21.7px;background:#0f1b3b;border-radius:4px"></div>
<div class="t" style="left:108.5px;top:10.7px;width:72.5px;text-align:center;font-size:13.5px;letter-spacing:0.3px;color:#1cc322">+0.01</div>
<div style="position:absolute;left:240.3px;top:6.3px;width:17.7px;height:17.7px;background:#f7b92e;border-radius:4px"><svg style="position:absolute;left:0;top:0" width="17.7" height="17.7" viewBox="0 0 17.7 17.7"><rect x="3.6" y="3.8" width="10.5" height="10.2" rx="1.6" fill="#fff" opacity=".55"/><rect x="3.6" y="3.8" width="4.7" height="4.6" rx="1.3" fill="#fff"/><rect x="9.4" y="3.8" width="4.7" height="4.6" rx="1.3" fill="#fff"/><rect x="3.6" y="9.4" width="4.7" height="4.6" rx="1.3" fill="#fff"/><rect x="9.4" y="9.4" width="4.7" height="4.6" rx="1.3" fill="#fff"/><circle cx="8.85" cy="8.9" r="1.1" fill="#f7b92e"/></svg></div>
<div class="t" style="left:6.5px;top:41.4px;font-size:11px;color:#fff;-webkit-text-stroke:0.35px #fff;letter-spacing:0.15px">Lots:</div>
<div style="position:absolute;left:53.5px;top:34.6px;width:43.0px;height:22.3px;background:#0f1b3b;border-radius:4px 0 0 4px"></div>
<div class="t" style="left:56.7px;top:41.4px;font-size:11px;color:#fff;-webkit-text-stroke:0.35px #fff;letter-spacing:0.15px">0.01</div>
<div style="position:absolute;left:97.1px;top:36.3px;width:10.4px;height:8.8px;background:#2c3f70;border-radius:3.5px 3.5px 0 0"><svg style="position:absolute;left:0;top:0" width="10.4" height="8.8" viewBox="0 0 10.4 8.8"><path d="M1 7.6 L3.9 4.2 L6.8 7.6 Z" fill="#f4f6fb"/></svg></div>
<div style="position:absolute;left:97.1px;top:47.0px;width:10.4px;height:8.8px;background:#2c3f70;border-radius:0 0 3.5px 3.5px"><svg style="position:absolute;left:0;top:0" width="10.4" height="8.8" viewBox="0 0 10.4 8.8"><path d="M1 1.3 L3.9 4.7 L6.8 1.3 Z" fill="#f4f6fb"/></svg></div>
<div class="t" style="left:6.5px;top:66.0px;font-size:11px;color:#fff;-webkit-text-stroke:0.35px #fff;letter-spacing:0.15px">S/L:</div>
<div style="position:absolute;left:53.5px;top:59.2px;width:43.0px;height:22.3px;background:#0f1b3b;border-radius:4px 0 0 4px"></div>
<div class="t" style="left:56.7px;top:66.0px;font-size:11px;color:#fff;-webkit-text-stroke:0.35px #fff;letter-spacing:0.15px">0</div>
<div style="position:absolute;left:97.1px;top:60.9px;width:10.4px;height:8.8px;background:#2c3f70;border-radius:3.5px 3.5px 0 0"><svg style="position:absolute;left:0;top:0" width="10.4" height="8.8" viewBox="0 0 10.4 8.8"><path d="M1 7.6 L3.9 4.2 L6.8 7.6 Z" fill="#f4f6fb"/></svg></div>
<div style="position:absolute;left:97.1px;top:71.6px;width:10.4px;height:8.8px;background:#2c3f70;border-radius:0 0 3.5px 3.5px"><svg style="position:absolute;left:0;top:0" width="10.4" height="8.8" viewBox="0 0 10.4 8.8"><path d="M1 1.3 L3.9 4.7 L6.8 1.3 Z" fill="#f4f6fb"/></svg></div>
<div class="t" style="left:151.0px;top:41.4px;font-size:11px;color:#fff;-webkit-text-stroke:0.35px #fff;letter-spacing:0.15px">T/S:</div>
<div style="position:absolute;left:176.9px;top:34.6px;width:43.0px;height:22.3px;background:#0f1b3b;border-radius:4px 0 0 4px"></div>
<div class="t" style="left:180.1px;top:41.4px;font-size:11px;color:#fff;-webkit-text-stroke:0.35px #fff;letter-spacing:0.15px">0</div>
<div style="position:absolute;left:220.5px;top:36.3px;width:10.4px;height:8.8px;background:#2c3f70;border-radius:3.5px 3.5px 0 0"><svg style="position:absolute;left:0;top:0" width="10.4" height="8.8" viewBox="0 0 10.4 8.8"><path d="M1 7.6 L3.9 4.2 L6.8 7.6 Z" fill="#f4f6fb"/></svg></div>
<div style="position:absolute;left:220.5px;top:47.0px;width:10.4px;height:8.8px;background:#2c3f70;border-radius:0 0 3.5px 3.5px"><svg style="position:absolute;left:0;top:0" width="10.4" height="8.8" viewBox="0 0 10.4 8.8"><path d="M1 1.3 L3.9 4.7 L6.8 1.3 Z" fill="#f4f6fb"/></svg></div>
<div class="t" style="left:151.0px;top:66.0px;font-size:11px;color:#fff;-webkit-text-stroke:0.35px #fff;letter-spacing:0.15px">T/P:</div>
<div style="position:absolute;left:176.9px;top:59.2px;width:43.0px;height:22.3px;background:#0f1b3b;border-radius:4px 0 0 4px"></div>
<div class="t" style="left:180.1px;top:66.0px;font-size:11px;color:#fff;-webkit-text-stroke:0.35px #fff;letter-spacing:0.15px">0</div>
<div style="position:absolute;left:220.5px;top:60.9px;width:10.4px;height:8.8px;background:#2c3f70;border-radius:3.5px 3.5px 0 0"><svg style="position:absolute;left:0;top:0" width="10.4" height="8.8" viewBox="0 0 10.4 8.8"><path d="M1 7.6 L3.9 4.2 L6.8 7.6 Z" fill="#f4f6fb"/></svg></div>
<div style="position:absolute;left:220.5px;top:71.6px;width:10.4px;height:8.8px;background:#2c3f70;border-radius:0 0 3.5px 3.5px"><svg style="position:absolute;left:0;top:0" width="10.4" height="8.8" viewBox="0 0 10.4 8.8"><path d="M1 1.3 L3.9 4.7 L6.8 1.3 Z" fill="#f4f6fb"/></svg></div>
<svg style="position:absolute;left:-1.5px;top:-1.5px" width="268" height="161.5" viewBox="0 0 268 161.5"><path d="M9.5 90 H125 a5 5 0 0 1 5 5 V128 a5 5 0 0 1 -5 5 H87 a5 5 0 0 0 -5 5 V152.5 a5 5 0 0 1 -5 5 H9.5 a5 5 0 0 1 -5 -5 V95 a5 5 0 0 1 5 -5 Z" fill="#2f4272" stroke="#3c4f7e" stroke-width="1"/><path d="M141.5 90 H257 a5 5 0 0 1 5 5 V152.5 a5 5 0 0 1 -5 5 H189 a5 5 0 0 1 -5 -5 V138 a5 5 0 0 0 -5 -5 H141.5 a5 5 0 0 1 -5 -5 V95 a5 5 0 0 1 5 -5 Z" fill="#2f4272" stroke="#3c4f7e" stroke-width="1"/></svg>
<div style="position:absolute;left:83.7px;top:135.7px;width:94.8px;height:19.3px;background:#0f1b3b;border-radius:4px"></div>
<div class="t" style="left:83.7px;top:140.3px;width:94.8px;text-align:center;font-size:13.5px;letter-spacing:0.4px;color:#fff">0.6</div>
<div class="t" style="left:27.1px;top:95.2px;line-height:28px;font-size:24.5px;color:#e81c25;letter-spacing:0px"><span style="font-size:13.5px;letter-spacing:-0.75px">1.17</span><span style="margin-left:0.6px">88</span><span style="font-size:13.5px;margin-left:0.3px">0</span></div>
<svg style="position:absolute;left:89.6px;top:103.4px" width="16.3" height="16.8" viewBox="0 0 16.3 16.8"><path d="M3.9 0 H12.4 V6.2 H16.3 L8.15 16.8 L0 6.2 H3.9 Z" fill="#e81c25"/></svg>
<svg style="position:absolute;left:157.0px;top:103.4px" width="16.3" height="16.8" viewBox="0 0 16.3 16.8"><path d="M3.9 0 H12.4 V6.2 H16.3 L8.15 16.8 L0 6.2 H3.9 Z" fill="#e81c25"/></svg>
<div class="t" style="left:178.3px;top:95.2px;line-height:28px;font-size:24.5px;color:#e81c25;letter-spacing:0px"><span style="font-size:13.5px;letter-spacing:-0.75px">1.17</span><span style="margin-left:0.6px">88</span><span style="font-size:13.5px;margin-left:0.3px">6</span></div>
<div class="t" style="left:30.3px;top:138.1px;font-size:14.5px;color:#e81c25;-webkit-text-stroke:0.45px #e81c25;letter-spacing:-0.4px">Sell</div>
<div class="t" style="left:210.5px;top:138.1px;font-size:14.5px;color:#e81c25;-webkit-text-stroke:0.45px #e81c25;letter-spacing:-0.1px">Buy</div>
</div>
<div style="position:absolute;left:1049.9px;top:137.0px;width:268px;height:161.5px;background:#1d2f5f;border:1.5px solid #15234a;border-radius:4px;box-shadow:0 1px 2px rgba(0,0,0,.35);font-family:'Liberation Sans',sans-serif">
<div class="t" style="left:6.3px;top:8.4px;font-size:16.5px;color:#fff;letter-spacing:-0.647px">GBPUSD</div>
<div style="position:absolute;left:108.5px;top:5.8px;width:72.5px;height:21.7px;background:#0f1b3b;border-radius:4px"></div>
<div style="position:absolute;left:240.3px;top:6.3px;width:17.7px;height:17.7px;background:#f7b92e;border-radius:4px"><svg style="position:absolute;left:0;top:0" width="17.7" height="17.7" viewBox="0 0 17.7 17.7"><rect x="3.6" y="3.8" width="10.5" height="10.2" rx="1.6" fill="#fff" opacity=".55"/><rect x="3.6" y="3.8" width="4.7" height="4.6" rx="1.3" fill="#fff"/><rect x="9.4" y="3.8" width="4.7" height="4.6" rx="1.3" fill="#fff"/><rect x="3.6" y="9.4" width="4.7" height="4.6" rx="1.3" fill="#fff"/><rect x="9.4" y="9.4" width="4.7" height="4.6" rx="1.3" fill="#fff"/><circle cx="8.85" cy="8.9" r="1.1" fill="#f7b92e"/></svg></div>
<div class="t" style="left:6.5px;top:41.4px;font-size:11px;color:#fff;-webkit-text-stroke:0.35px #fff;letter-spacing:0.15px">Lots:</div>
<div style="position:absolute;left:53.5px;top:34.6px;width:43.0px;height:22.3px;background:#0f1b3b;border-radius:4px 0 0 4px"></div>
<div class="t" style="left:56.7px;top:41.4px;font-size:11px;color:#fff;-webkit-text-stroke:0.35px #fff;letter-spacing:0.15px">0.01</div>
<div style="position:absolute;left:97.1px;top:36.3px;width:10.4px;height:8.8px;background:#2c3f70;border-radius:3.5px 3.5px 0 0"><svg style="position:absolute;left:0;top:0" width="10.4" height="8.8" viewBox="0 0 10.4 8.8"><path d="M1 7.6 L3.9 4.2 L6.8 7.6 Z" fill="#f4f6fb"/></svg></div>
<div style="position:absolute;left:97.1px;top:47.0px;width:10.4px;height:8.8px;background:#2c3f70;border-radius:0 0 3.5px 3.5px"><svg style="position:absolute;left:0;top:0" width="10.4" height="8.8" viewBox="0 0 10.4 8.8"><path d="M1 1.3 L3.9 4.7 L6.8 1.3 Z" fill="#f4f6fb"/></svg></div>
<div class="t" style="left:6.5px;top:66.0px;font-size:11px;color:#fff;-webkit-text-stroke:0.35px #fff;letter-spacing:0.15px">S/L:</div>
<div style="position:absolute;left:53.5px;top:59.2px;width:43.0px;height:22.3px;background:#0f1b3b;border-radius:4px 0 0 4px"></div>
<div class="t" style="left:56.7px;top:66.0px;font-size:11px;color:#fff;-webkit-text-stroke:0.35px #fff;letter-spacing:0.15px">0</div>
<div style="position:absolute;left:97.1px;top:60.9px;width:10.4px;height:8.8px;background:#2c3f70;border-radius:3.5px 3.5px 0 0"><svg style="position:absolute;left:0;top:0" width="10.4" height="8.8" viewBox="0 0 10.4 8.8"><path d="M1 7.6 L3.9 4.2 L6.8 7.6 Z" fill="#f4f6fb"/></svg></div>
<div style="position:absolute;left:97.1px;top:71.6px;width:10.4px;height:8.8px;background:#2c3f70;border-radius:0 0 3.5px 3.5px"><svg style="position:absolute;left:0;top:0" width="10.4" height="8.8" viewBox="0 0 10.4 8.8"><path d="M1 1.3 L3.9 4.7 L6.8 1.3 Z" fill="#f4f6fb"/></svg></div>
<div class="t" style="left:151.0px;top:41.4px;font-size:11px;color:#fff;-webkit-text-stroke:0.35px #fff;letter-spacing:0.15px">T/S:</div>
<div style="position:absolute;left:176.9px;top:34.6px;width:43.0px;height:22.3px;background:#0f1b3b;border-radius:4px 0 0 4px"></div>
<div class="t" style="left:180.1px;top:41.4px;font-size:11px;color:#fff;-webkit-text-stroke:0.35px #fff;letter-spacing:0.15px">0</div>
<div style="position:absolute;left:220.5px;top:36.3px;width:10.4px;height:8.8px;background:#2c3f70;border-radius:3.5px 3.5px 0 0"><svg style="position:absolute;left:0;top:0" width="10.4" height="8.8" viewBox="0 0 10.4 8.8"><path d="M1 7.6 L3.9 4.2 L6.8 7.6 Z" fill="#f4f6fb"/></svg></div>
<div style="position:absolute;left:220.5px;top:47.0px;width:10.4px;height:8.8px;background:#2c3f70;border-radius:0 0 3.5px 3.5px"><svg style="position:absolute;left:0;top:0" width="10.4" height="8.8" viewBox="0 0 10.4 8.8"><path d="M1 1.3 L3.9 4.7 L6.8 1.3 Z" fill="#f4f6fb"/></svg></div>
<div class="t" style="left:151.0px;top:66.0px;font-size:11px;color:#fff;-webkit-text-stroke:0.35px #fff;letter-spacing:0.15px">T/P:</div>
<div style="position:absolute;left:176.9px;top:59.2px;width:43.0px;height:22.3px;background:#0f1b3b;border-radius:4px 0 0 4px"></div>
<div class="t" style="left:180.1px;top:66.0px;font-size:11px;color:#fff;-webkit-text-stroke:0.35px #fff;letter-spacing:0.15px">0</div>
<div style="position:absolute;left:220.5px;top:60.9px;width:10.4px;height:8.8px;background:#2c3f70;border-radius:3.5px 3.5px 0 0"><svg style="position:absolute;left:0;top:0" width="10.4" height="8.8" viewBox="0 0 10.4 8.8"><path d="M1 7.6 L3.9 4.2 L6.8 7.6 Z" fill="#f4f6fb"/></svg></div>
<div style="position:absolute;left:220.5px;top:71.6px;width:10.4px;height:8.8px;background:#2c3f70;border-radius:0 0 3.5px 3.5px"><svg style="position:absolute;left:0;top:0" width="10.4" height="8.8" viewBox="0 0 10.4 8.8"><path d="M1 1.3 L3.9 4.7 L6.8 1.3 Z" fill="#f4f6fb"/></svg></div>
<svg style="position:absolute;left:-1.5px;top:-1.5px" width="268" height="161.5" viewBox="0 0 268 161.5"><path d="M9.5 90 H125 a5 5 0 0 1 5 5 V128 a5 5 0 0 1 -5 5 H87 a5 5 0 0 0 -5 5 V152.5 a5 5 0 0 1 -5 5 H9.5 a5 5 0 0 1 -5 -5 V95 a5 5 0 0 1 5 -5 Z" fill="#2f4272" stroke="#3c4f7e" stroke-width="1"/><path d="M141.5 90 H257 a5 5 0 0 1 5 5 V152.5 a5 5 0 0 1 -5 5 H189 a5 5 0 0 1 -5 -5 V138 a5 5 0 0 0 -5 -5 H141.5 a5 5 0 0 1 -5 -5 V95 a5 5 0 0 1 5 -5 Z" fill="#2f4272" stroke="#3c4f7e" stroke-width="1"/></svg>
<div style="position:absolute;left:83.7px;top:135.7px;width:94.8px;height:19.3px;background:#0f1b3b;border-radius:4px"></div>
<div class="t" style="left:83.7px;top:140.3px;width:94.8px;text-align:center;font-size:13.5px;letter-spacing:0.4px;color:#fff">1.2</div>
<div class="t" style="left:27.1px;top:95.2px;line-height:28px;font-size:24.5px;color:#e81c25;letter-spacing:0px"><span style="font-size:13.5px;letter-spacing:-0.75px">1.36</span><span style="margin-left:0.6px">54</span><span style="font-size:13.5px;margin-left:0.3px">6</span></div>
<svg style="position:absolute;left:89.6px;top:103.4px" width="16.3" height="16.8" viewBox="0 0 16.3 16.8"><path d="M3.9 0 H12.4 V6.2 H16.3 L8.15 16.8 L0 6.2 H3.9 Z" fill="#e81c25"/></svg>
<svg style="position:absolute;left:157.0px;top:103.4px" width="16.3" height="16.8" viewBox="0 0 16.3 16.8"><path d="M3.9 0 H12.4 V6.2 H16.3 L8.15 16.8 L0 6.2 H3.9 Z" fill="#e81c25"/></svg>
<div class="t" style="left:178.3px;top:95.2px;line-height:28px;font-size:24.5px;color:#e81c25;letter-spacing:0px"><span style="font-size:13.5px;letter-spacing:-0.75px">1.36</span><span style="margin-left:0.6px">55</span><span style="font-size:13.5px;margin-left:0.3px">8</span></div>
<div class="t" style="left:30.3px;top:138.1px;font-size:14.5px;color:#e81c25;-webkit-text-stroke:0.45px #e81c25;letter-spacing:-0.4px">Sell</div>
<div class="t" style="left:210.5px;top:138.1px;font-size:14.5px;color:#e81c25;-webkit-text-stroke:0.45px #e81c25;letter-spacing:-0.1px">Buy</div>
</div>
<div style="position:absolute;left:760.5px;top:319.8px;width:268px;height:161.5px;background:#1d2f5f;border:1.5px solid #15234a;border-radius:4px;box-shadow:0 1px 2px rgba(0,0,0,.35);font-family:'Liberation Sans',sans-serif">
<div class="t" style="left:6.3px;top:8.4px;font-size:16.5px;color:#fff;letter-spacing:-0.546px">USDCAD</div>
<div style="position:absolute;left:108.5px;top:5.8px;width:72.5px;height:21.7px;background:#0f1b3b;border-radius:4px"></div>
<div style="position:absolute;left:240.3px;top:6.3px;width:17.7px;height:17.7px;background:#f7b92e;border-radius:4px"><svg style="position:absolute;left:0;top:0" width="17.7" height="17.7" viewBox="0 0 17.7 17.7"><rect x="3.6" y="3.8" width="10.5" height="10.2" rx="1.6" fill="#fff" opacity=".55"/><rect x="3.6" y="3.8" width="4.7" height="4.6" rx="1.3" fill="#fff"/><rect x="9.4" y="3.8" width="4.7" height="4.6" rx="1.3" fill="#fff"/><rect x="3.6" y="9.4" width="4.7" height="4.6" rx="1.3" fill="#fff"/><rect x="9.4" y="9.4" width="4.7" height="4.6" rx="1.3" fill="#fff"/><circle cx="8.85" cy="8.9" r="1.1" fill="#f7b92e"/></svg></div>
<div class="t" style="left:6.5px;top:41.4px;font-size:11px;color:#fff;-webkit-text-stroke:0.35px #fff;letter-spacing:0.15px">Lots:</div>
<div style="position:absolute;left:53.5px;top:34.6px;width:43.0px;height:22.3px;background:#0f1b3b;border-radius:4px 0 0 4px"></div>
<div class="t" style="left:56.7px;top:41.4px;font-size:11px;color:#fff;-webkit-text-stroke:0.35px #fff;letter-spacing:0.15px">0.01</div>
<div style="position:absolute;left:97.1px;top:36.3px;width:10.4px;height:8.8px;background:#2c3f70;border-radius:3.5px 3.5px 0 0"><svg style="position:absolute;left:0;top:0" width="10.4" height="8.8" viewBox="0 0 10.4 8.8"><path d="M1 7.6 L3.9 4.2 L6.8 7.6 Z" fill="#f4f6fb"/></svg></div>
<div style="position:absolute;left:97.1px;top:47.0px;width:10.4px;height:8.8px;background:#2c3f70;border-radius:0 0 3.5px 3.5px"><svg style="position:absolute;left:0;top:0" width="10.4" height="8.8" viewBox="0 0 10.4 8.8"><path d="M1 1.3 L3.9 4.7 L6.8 1.3 Z" fill="#f4f6fb"/></svg></div>
<div class="t" style="left:6.5px;top:66.0px;font-size:11px;color:#fff;-webkit-text-stroke:0.35px #fff;letter-spacing:0.15px">S/L:</div>
<div style="position:absolute;left:53.5px;top:59.2px;width:43.0px;height:22.3px;background:#0f1b3b;border-radius:4px 0 0 4px"></div>
<div class="t" style="left:56.7px;top:66.0px;font-size:11px;color:#fff;-webkit-text-stroke:0.35px #fff;letter-spacing:0.15px">0</div>
<div style="position:absolute;left:97.1px;top:60.9px;width:10.4px;height:8.8px;background:#2c3f70;border-radius:3.5px 3.5px 0 0"><svg style="position:absolute;left:0;top:0" width="10.4" height="8.8" viewBox="0 0 10.4 8.8"><path d="M1 7.6 L3.9 4.2 L6.8 7.6 Z" fill="#f4f6fb"/></svg></div>
<div style="position:absolute;left:97.1px;top:71.6px;width:10.4px;height:8.8px;background:#2c3f70;border-radius:0 0 3.5px 3.5px"><svg style="position:absolute;left:0;top:0" width="10.4" height="8.8" viewBox="0 0 10.4 8.8"><path d="M1 1.3 L3.9 4.7 L6.8 1.3 Z" fill="#f4f6fb"/></svg></div>
<div class="t" style="left:151.0px;top:41.4px;font-size:11px;color:#fff;-webkit-text-stroke:0.35px #fff;letter-spacing:0.15px">T/S:</div>
<div style="position:absolute;left:176.9px;top:34.6px;width:43.0px;height:22.3px;background:#0f1b3b;border-radius:4px 0 0 4px"></div>
<div class="t" style="left:180.1px;top:41.4px;font-size:11px;color:#fff;-webkit-text-stroke:0.35px #fff;letter-spacing:0.15px">0</div>
<div style="position:absolute;left:220.5px;top:36.3px;width:10.4px;height:8.8px;background:#2c3f70;border-radius:3.5px 3.5px 0 0"><svg style="position:absolute;left:0;top:0" width="10.4" height="8.8" viewBox="0 0 10.4 8.8"><path d="M1 7.6 L3.9 4.2 L6.8 7.6 Z" fill="#f4f6fb"/></svg></div>
<div style="position:absolute;left:220.5px;top:47.0px;width:10.4px;height:8.8px;background:#2c3f70;border-radius:0 0 3.5px 3.5px"><svg style="position:absolute;left:0;top:0" width="10.4" height="8.8" viewBox="0 0 10.4 8.8"><path d="M1 1.3 L3.9 4.7 L6.8 1.3 Z" fill="#f4f6fb"/></svg></div>
<div class="t" style="left:151.0px;top:66.0px;font-size:11px;color:#fff;-webkit-text-stroke:0.35px #fff;letter-spacing:0.15px">T/P:</div>
<div style="position:absolute;left:176.9px;top:59.2px;width:43.0px;height:22.3px;background:#0f1b3b;border-radius:4px 0 0 4px"></div>
<div class="t" style="left:180.1px;top:66.0px;font-size:11px;color:#fff;-webkit-text-stroke:0.35px #fff;letter-spacing:0.15px">0</div>
<div style="position:absolute;left:220.5px;top:60.9px;width:10.4px;height:8.8px;background:#2c3f70;border-radius:3.5px 3.5px 0 0"><svg style="position:absolute;left:0;top:0" width="10.4" height="8.8" viewBox="0 0 10.4 8.8"><path d="M1 7.6 L3.9 4.2 L6.8 7.6 Z" fill="#f4f6fb"/></svg></div>
<div style="position:absolute;left:220.5px;top:71.6px;width:10.4px;height:8.8px;background:#2c3f70;border-radius:0 0 3.5px 3.5px"><svg style="position:absolute;left:0;top:0" width="10.4" height="8.8" viewBox="0 0 10.4 8.8"><path d="M1 1.3 L3.9 4.7 L6.8 1.3 Z" fill="#f4f6fb"/></svg></div>
<svg style="position:absolute;left:-1.5px;top:-1.5px" width="268" height="161.5" viewBox="0 0 268 161.5"><path d="M9.5 90 H125 a5 5 0 0 1 5 5 V128 a5 5 0 0 1 -5 5 H87 a5 5 0 0 0 -5 5 V152.5 a5 5 0 0 1 -5 5 H9.5 a5 5 0 0 1 -5 -5 V95 a5 5 0 0 1 5 -5 Z" fill="#2f4272" stroke="#3c4f7e" stroke-width="1"/><path d="M141.5 90 H257 a5 5 0 0 1 5 5 V152.5 a5 5 0 0 1 -5 5 H189 a5 5 0 0 1 -5 -5 V138 a5 5 0 0 0 -5 -5 H141.5 a5 5 0 0 1 -5 -5 V95 a5 5 0 0 1 5 -5 Z" fill="#2f4272" stroke="#3c4f7e" stroke-width="1"/></svg>
<div style="position:absolute;left:83.7px;top:135.7px;width:94.8px;height:19.3px;background:#0f1b3b;border-radius:4px"></div>
<div class="t" style="left:83.7px;top:140.3px;width:94.8px;text-align:center;font-size:13.5px;letter-spacing:0.4px;color:#fff">1.7</div>
<div class="t" style="left:27.1px;top:95.2px;line-height:28px;font-size:24.5px;color:#1fc02a;letter-spacing:0px"><span style="font-size:13.5px;letter-spacing:-0.75px">1.36</span><span style="margin-left:0.6px">80</span><span style="font-size:13.5px;margin-left:0.3px">2</span></div>
<svg style="position:absolute;left:89.6px;top:102.5px" width="16.3" height="16.8" viewBox="0 0 16.3 16.8"><path transform="rotate(180 8.15 8.4)" d="M3.9 0 H12.4 V6.2 H16.3 L8.15 16.8 L0 6.2 H3.9 Z" fill="#12b36b"/></svg>
<svg style="position:absolute;left:157.0px;top:103.4px" width="16.3" height="16.8" viewBox="0 0 16.3 16.8"><path d="M3.9 0 H12.4 V6.2 H16.3 L8.15 16.8 L0 6.2 H3.9 Z" fill="#e81c25"/></svg>
<div class="t" style="left:178.3px;top:95.2px;line-height:28px;font-size:24.5px;color:#e81c25;letter-spacing:0px"><span style="font-size:13.5px;letter-spacing:-0.75px">1.36</span><span style="margin-left:0.6px">81</span><span style="font-size:13.5px;margin-left:0.3px">9</span></div>
<div class="t" style="left:30.3px;top:138.1px;font-size:14.5px;color:#1fc02a;-webkit-text-stroke:0.45px #1fc02a;letter-spacing:-0.4px">Sell</div>
<div class="t" style="left:210.5px;top:138.1px;font-size:14.5px;color:#e81c25;-webkit-text-stroke:0.45px #e81c25;letter-spacing:-0.1px">Buy</div>
</div>
<div style="position:absolute;left:1049.9px;top:319.8px;width:268px;height:161.5px;background:#1d2f5f;border:1.5px solid #15234a;border-radius:4px;box-shadow:0 1px 2px rgba(0,0,0,.35);font-family:'Liberation Sans',sans-serif">
<div class="t" style="left:6.3px;top:8.4px;font-size:16.5px;color:#fff;letter-spacing:-1.367px">USDJPY</div>
<div style="position:absolute;left:108.5px;top:5.8px;width:72.5px;height:21.7px;background:#0f1b3b;border-radius:4px"></div>
<div style="position:absolute;left:240.3px;top:6.3px;width:17.7px;height:17.7px;background:#f7b92e;border-radius:4px"><svg style="position:absolute;left:0;top:0" width="17.7" height="17.7" viewBox="0 0 17.7 17.7"><rect x="3.6" y="3.8" width="10.5" height="10.2" rx="1.6" fill="#fff" opacity=".55"/><rect x="3.6" y="3.8" width="4.7" height="4.6" rx="1.3" fill="#fff"/><rect x="9.4" y="3.8" width="4.7" height="4.6" rx="1.3" fill="#fff"/><rect x="3.6" y="9.4" width="4.7" height="4.6" rx="1.3" fill="#fff"/><rect x="9.4" y="9.4" width="4.7" height="4.6" rx="1.3" fill="#fff"/><circle cx="8.85" cy="8.9" r="1.1" fill="#f7b92e"/></svg></div>
<div class="t" style="left:6.5px;top:41.4px;font-size:11px;color:#fff;-webkit-text-stroke:0.35px #fff;letter-spacing:0.15px">Lots:</div>
<div style="position:absolute;left:53.5px;top:34.6px;width:43.0px;height:22.3px;background:#0f1b3b;border-radius:4px 0 0 4px"></div>
<div class="t" style="left:56.7px;top:41.4px;font-size:11px;color:#fff;-webkit-text-stroke:0.35px #fff;letter-spacing:0.15px">0.01</div>
<div style="position:absolute;left:97.1px;top:36.3px;width:10.4px;height:8.8px;background:#2c3f70;border-radius:3.5px 3.5px 0 0"><svg style="position:absolute;left:0;top:0" width="10.4" height="8.8" viewBox="0 0 10.4 8.8"><path d="M1 7.6 L3.9 4.2 L6.8 7.6 Z" fill="#f4f6fb"/></svg></div>
<div style="position:absolute;left:97.1px;top:47.0px;width:10.4px;height:8.8px;background:#2c3f70;border-radius:0 0 3.5px 3.5px"><svg style="position:absolute;left:0;top:0" width="10.4" height="8.8" viewBox="0 0 10.4 8.8"><path d="M1 1.3 L3.9 4.7 L6.8 1.3 Z" fill="#f4f6fb"/></svg></div>
<div class="t" style="left:6.5px;top:66.0px;font-size:11px;color:#fff;-webkit-text-stroke:0.35px #fff;letter-spacing:0.15px">S/L:</div>
<div style="position:absolute;left:53.5px;top:59.2px;width:43.0px;height:22.3px;background:#0f1b3b;border-radius:4px 0 0 4px"></div>
<div class="t" style="left:56.7px;top:66.0px;font-size:11px;color:#fff;-webkit-text-stroke:0.35px #fff;letter-spacing:0.15px">0</div>
<div style="position:absolute;left:97.1px;top:60.9px;width:10.4px;height:8.8px;background:#2c3f70;border-radius:3.5px 3.5px 0 0"><svg style="position:absolute;left:0;top:0" width="10.4" height="8.8" viewBox="0 0 10.4 8.8"><path d="M1 7.6 L3.9 4.2 L6.8 7.6 Z" fill="#f4f6fb"/></svg></div>
<div style="position:absolute;left:97.1px;top:71.6px;width:10.4px;height:8.8px;background:#2c3f70;border-radius:0 0 3.5px 3.5px"><svg style="position:absolute;left:0;top:0" width="10.4" height="8.8" viewBox="0 0 10.4 8.8"><path d="M1 1.3 L3.9 4.7 L6.8 1.3 Z" fill="#f4f6fb"/></svg></div>
<div class="t" style="left:151.0px;top:41.4px;font-size:11px;color:#fff;-webkit-text-stroke:0.35px #fff;letter-spacing:0.15px">T/S:</div>
<div style="position:absolute;left:176.9px;top:34.6px;width:43.0px;height:22.3px;background:#0f1b3b;border-radius:4px 0 0 4px"></div>
<div class="t" style="left:180.1px;top:41.4px;font-size:11px;color:#fff;-webkit-text-stroke:0.35px #fff;letter-spacing:0.15px">0</div>
<div style="position:absolute;left:220.5px;top:36.3px;width:10.4px;height:8.8px;background:#2c3f70;border-radius:3.5px 3.5px 0 0"><svg style="position:absolute;left:0;top:0" width="10.4" height="8.8" viewBox="0 0 10.4 8.8"><path d="M1 7.6 L3.9 4.2 L6.8 7.6 Z" fill="#f4f6fb"/></svg></div>
<div style="position:absolute;left:220.5px;top:47.0px;width:10.4px;height:8.8px;background:#2c3f70;border-radius:0 0 3.5px 3.5px"><svg style="position:absolute;left:0;top:0" width="10.4" height="8.8" viewBox="0 0 10.4 8.8"><path d="M1 1.3 L3.9 4.7 L6.8 1.3 Z" fill="#f4f6fb"/></svg></div>
<div class="t" style="left:151.0px;top:66.0px;font-size:11px;color:#fff;-webkit-text-stroke:0.35px #fff;letter-spacing:0.15px">T/P:</div>
<div style="position:absolute;left:176.9px;top:59.2px;width:43.0px;height:22.3px;background:#0f1b3b;border-radius:4px 0 0 4px"></div>
<div class="t" style="left:180.1px;top:66.0px;font-size:11px;color:#fff;-webkit-text-stroke:0.35px #fff;letter-spacing:0.15px">0</div>
<div style="position:absolute;left:220.5px;top:60.9px;width:10.4px;height:8.8px;background:#2c3f70;border-radius:3.5px 3.5px 0 0"><svg style="position:absolute;left:0;top:0" width="10.4" height="8.8" viewBox="0 0 10.4 8.8"><path d="M1 7.6 L3.9 4.2 L6.8 7.6 Z" fill="#f4f6fb"/></svg></div>
<div style="position:absolute;left:220.5px;top:71.6px;width:10.4px;height:8.8px;background:#2c3f70;border-radius:0 0 3.5px 3.5px"><svg style="position:absolute;left:0;top:0" width="10.4" height="8.8" viewBox="0 0 10.4 8.8"><path d="M1 1.3 L3.9 4.7 L6.8 1.3 Z" fill="#f4f6fb"/></svg></div>
<svg style="position:absolute;left:-1.5px;top:-1.5px" width="268" height="161.5" viewBox="0 0 268 161.5"><path d="M9.5 90 H125 a5 5 0 0 1 5 5 V128 a5 5 0 0 1 -5 5 H87 a5 5 0 0 0 -5 5 V152.5 a5 5 0 0 1 -5 5 H9.5 a5 5 0 0 1 -5 -5 V95 a5 5 0 0 1 5 -5 Z" fill="#2f4272" stroke="#3c4f7e" stroke-width="1"/><path d="M141.5 90 H257 a5 5 0 0 1 5 5 V152.5 a5 5 0 0 1 -5 5 H189 a5 5 0 0 1 -5 -5 V138 a5 5 0 0 0 -5 -5 H141.5 a5 5 0 0 1 -5 -5 V95 a5 5 0 0 1 5 -5 Z" fill="#2f4272" stroke="#3c4f7e" stroke-width="1"/></svg>
<div style="position:absolute;left:83.7px;top:135.7px;width:94.8px;height:19.3px;background:#0f1b3b;border-radius:4px"></div>
<div class="t" style="left:83.7px;top:140.3px;width:94.8px;text-align:center;font-size:13.5px;letter-spacing:0.4px;color:#fff">1.0</div>
<div class="t" style="left:27.1px;top:95.2px;line-height:28px;font-size:24.5px;color:#1fc02a;letter-spacing:0px"><span style="font-size:13.5px;letter-spacing:-0.05px">155.</span><span style="margin-left:0.6px">96</span><span style="font-size:13.5px;margin-left:0.3px">8</span></div>
<svg style="position:absolute;left:89.6px;top:102.5px" width="16.3" height="16.8" viewBox="0 0 16.3 16.8"><path transform="rotate(180 8.15 8.4)" d="M3.9 0 H12.4 V6.2 H16.3 L8.15 16.8 L0 6.2 H3.9 Z" fill="#12b36b"/></svg>
<svg style="position:absolute;left:157.0px;top:102.5px" width="16.3" height="16.8" viewBox="0 0 16.3 16.8"><path transform="rotate(180 8.15 8.4)" d="M3.9 0 H12.4 V6.2 H16.3 L8.15 16.8 L0 6.2 H3.9 Z" fill="#12b36b"/></svg>
<div class="t" style="left:178.3px;top:95.2px;line-height:28px;font-size:24.5px;color:#1fc02a;letter-spacing:0px"><span style="font-size:13.5px;letter-spacing:-0.05px">155.</span><span style="margin-left:0.6px">97</span><span style="font-size:13.5px;margin-left:0.3px">8</span></div>
<div class="t" style="left:30.3px;top:138.1px;font-size:14.5px;color:#1fc02a;-webkit-text-stroke:0.45px #1fc02a;letter-spacing:-0.4px">Sell</div>
<div class="t" style="left:210.5px;top:138.1px;font-size:14.5px;color:#1fc02a;-webkit-text-stroke:0.45px #1fc02a;letter-spacing:-0.1px">Buy</div>
</div>
<div style="position:absolute;left:760.5px;top:501.5px;width:268px;height:161.5px;background:#1d2f5f;border:1.5px solid #15234a;border-radius:4px;box-shadow:0 1px 2px rgba(0,0,0,.35);font-family:'Liberation Sans',sans-serif">
<div class="t" style="left:6.3px;top:8.4px;font-size:16.5px;color:#fff;letter-spacing:-0.313px">AUDUSD</div>
<div style="position:absolute;left:108.5px;top:5.8px;width:72.5px;height:21.7px;background:#0f1b3b;border-radius:4px"></div>
<div style="position:absolute;left:240.3px;top:6.3px;width:17.7px;height:17.7px;background:#f7b92e;border-radius:4px"><svg style="position:absolute;left:0;top:0" width="17.7" height="17.7" viewBox="0 0 17.7 17.7"><rect x="3.6" y="3.8" width="10.5" height="10.2" rx="1.6" fill="#fff" opacity=".55"/><rect x="3.6" y="3.8" width="4.7" height="4.6" rx="1.3" fill="#fff"/><rect x="9.4" y="3.8" width="4.7" height="4.6" rx="1.3" fill="#fff"/><rect x="3.6" y="9.4" width="4.7" height="4.6" rx="1.3" fill="#fff"/><rect x="9.4" y="9.4" width="4.7" height="4.6" rx="1.3" fill="#fff"/><circle cx="8.85" cy="8.9" r="1.1" fill="#f7b92e"/></svg></div>
<div class="t" style="left:6.5px;top:41.4px;font-size:11px;color:#fff;-webkit-text-stroke:0.35px #fff;letter-spacing:0.15px">Lots:</div>
<div style="position:absolute;left:53.5px;top:34.6px;width:43.0px;height:22.3px;background:#0f1b3b;border-radius:4px 0 0 4px"></div>
<div class="t" style="left:56.7px;top:41.4px;font-size:11px;color:#fff;-webkit-text-stroke:0.35px #fff;letter-spacing:0.15px">0.01</div>
<div style="position:absolute;left:97.1px;top:36.3px;width:10.4px;height:8.8px;background:#2c3f70;border-radius:3.5px 3.5px 0 0"><svg style="position:absolute;left:0;top:0" width="10.4" height="8.8" viewBox="0 0 10.4 8.8"><path d="M1 7.6 L3.9 4.2 L6.8 7.6 Z" fill="#f4f6fb"/></svg></div>
<div style="position:absolute;left:97.1px;top:47.0px;width:10.4px;height:8.8px;background:#2c3f70;border-radius:0 0 3.5px 3.5px"><svg style="position:absolute;left:0;top:0" width="10.4" height="8.8" viewBox="0 0 10.4 8.8"><path d="M1 1.3 L3.9 4.7 L6.8 1.3 Z" fill="#f4f6fb"/></svg></div>
<div class="t" style="left:6.5px;top:66.0px;font-size:11px;color:#fff;-webkit-text-stroke:0.35px #fff;letter-spacing:0.15px">S/L:</div>
<div style="position:absolute;left:53.5px;top:59.2px;width:43.0px;height:22.3px;background:#0f1b3b;border-radius:4px 0 0 4px"></div>
<div class="t" style="left:56.7px;top:66.0px;font-size:11px;color:#fff;-webkit-text-stroke:0.35px #fff;letter-spacing:0.15px">0</div>
<div style="position:absolute;left:97.1px;top:60.9px;width:10.4px;height:8.8px;background:#2c3f70;border-radius:3.5px 3.5px 0 0"><svg style="position:absolute;left:0;top:0" width="10.4" height="8.8" viewBox="0 0 10.4 8.8"><path d="M1 7.6 L3.9 4.2 L6.8 7.6 Z" fill="#f4f6fb"/></svg></div>
<div style="position:absolute;left:97.1px;top:71.6px;width:10.4px;height:8.8px;background:#2c3f70;border-radius:0 0 3.5px 3.5px"><svg style="position:absolute;left:0;top:0" width="10.4" height="8.8" viewBox="0 0 10.4 8.8"><path d="M1 1.3 L3.9 4.7 L6.8 1.3 Z" fill="#f4f6fb"/></svg></div>
<div class="t" style="left:151.0px;top:41.4px;font-size:11px;color:#fff;-webkit-text-stroke:0.35px #fff;letter-spacing:0.15px">T/S:</div>
<div style="position:absolute;left:176.9px;top:34.6px;width:43.0px;height:22.3px;background:#0f1b3b;border-radius:4px 0 0 4px"></div>
<div class="t" style="left:180.1px;top:41.4px;font-size:11px;color:#fff;-webkit-text-stroke:0.35px #fff;letter-spacing:0.15px">0</div>
<div style="position:absolute;left:220.5px;top:36.3px;width:10.4px;height:8.8px;background:#2c3f70;border-radius:3.5px 3.5px 0 0"><svg style="position:absolute;left:0;top:0" width="10.4" height="8.8" viewBox="0 0 10.4 8.8"><path d="M1 7.6 L3.9 4.2 L6.8 7.6 Z" fill="#f4f6fb"/></svg></div>
<div style="position:absolute;left:220.5px;top:47.0px;width:10.4px;height:8.8px;background:#2c3f70;border-radius:0 0 3.5px 3.5px"><svg style="position:absolute;left:0;top:0" width="10.4" height="8.8" viewBox="0 0 10.4 8.8"><path d="M1 1.3 L3.9 4.7 L6.8 1.3 Z" fill="#f4f6fb"/></svg></div>
<div class="t" style="left:151.0px;top:66.0px;font-size:11px;color:#fff;-webkit-text-stroke:0.35px #fff;letter-spacing:0.15px">T/P:</div>
<div style="position:absolute;left:176.9px;top:59.2px;width:43.0px;height:22.3px;background:#0f1b3b;border-radius:4px 0 0 4px"></div>
<div class="t" style="left:180.1px;top:66.0px;font-size:11px;color:#fff;-webkit-text-stroke:0.35px #fff;letter-spacing:0.15px">0</div>
<div style="position:absolute;left:220.5px;top:60.9px;width:10.4px;height:8.8px;background:#2c3f70;border-radius:3.5px 3.5px 0 0"><svg style="position:absolute;left:0;top:0" width="10.4" height="8.8" viewBox="0 0 10.4 8.8"><path d="M1 7.6 L3.9 4.2 L6.8 7.6 Z" fill="#f4f6fb"/></svg></div>
<div style="position:absolute;left:220.5px;top:71.6px;width:10.4px;height:8.8px;background:#2c3f70;border-radius:0 0 3.5px 3.5px"><svg style="position:absolute;left:0;top:0" width="10.4" height="8.8" viewBox="0 0 10.4 8.8"><path d="M1 1.3 L3.9 4.7 L6.8 1.3 Z" fill="#f4f6fb"/></svg></div>
<svg style="position:absolute;left:-1.5px;top:-1.5px" width="268" height="161.5" viewBox="0 0 268 161.5"><path d="M9.5 90 H125 a5 5 0 0 1 5 5 V128 a5 5 0 0 1 -5 5 H87 a5 5 0 0 0 -5 5 V152.5 a5 5 0 0 1 -5 5 H9.5 a5 5 0 0 1 -5 -5 V95 a5 5 0 0 1 5 -5 Z" fill="#2f4272" stroke="#3c4f7e" stroke-width="1"/><path d="M141.5 90 H257 a5 5 0 0 1 5 5 V152.5 a5 5 0 0 1 -5 5 H189 a5 5 0 0 1 -5 -5 V138 a5 5 0 0 0 -5 -5 H141.5 a5 5 0 0 1 -5 -5 V95 a5 5 0 0 1 5 -5 Z" fill="#2f4272" stroke="#3c4f7e" stroke-width="1"/></svg>
<div style="position:absolute;left:83.7px;top:135.7px;width:94.8px;height:19.3px;background:#0f1b3b;border-radius:4px"></div>
<div class="t" style="left:83.7px;top:140.3px;width:94.8px;text-align:center;font-size:13.5px;letter-spacing:0.4px;color:#fff">1.1</div>
<div class="t" style="left:27.1px;top:95.2px;line-height:28px;font-size:24.5px;color:#e81c25;letter-spacing:0px"><span style="font-size:13.5px;letter-spacing:-0.75px">0.70</span><span style="margin-left:0.6px">03</span><span style="font-size:13.5px;margin-left:0.3px">6</span></div>
<svg style="position:absolute;left:89.6px;top:103.4px" width="16.3" height="16.8" viewBox="0 0 16.3 16.8"><path d="M3.9 0 H12.4 V6.2 H16.3 L8.15 16.8 L0 6.2 H3.9 Z" fill="#e81c25"/></svg>
<svg style="position:absolute;left:157.0px;top:103.4px" width="16.3" height="16.8" viewBox="0 0 16.3 16.8"><path d="M3.9 0 H12.4 V6.2 H16.3 L8.15 16.8 L0 6.2 H3.9 Z" fill="#e81c25"/></svg>
<div class="t" style="left:178.3px;top:95.2px;line-height:28px;font-size:24.5px;color:#e81c25;letter-spacing:0px"><span style="font-size:13.5px;letter-spacing:-0.75px">0.70</span><span style="margin-left:0.6px">04</span><span style="font-size:13.5px;margin-left:0.3px">7</span></div>
<div class="t" style="left:30.3px;top:138.1px;font-size:14.5px;color:#e81c25;-webkit-text-stroke:0.45px #e81c25;letter-spacing:-0.4px">Sell</div>
<div class="t" style="left:210.5px;top:138.1px;font-size:14.5px;color:#e81c25;-webkit-text-stroke:0.45px #e81c25;letter-spacing:-0.1px">Buy</div>
</div>
<div style="position:absolute;left:1049.9px;top:501.5px;width:268px;height:161.5px;background:#1d2f5f;border:1.5px solid #15234a;border-radius:4px;box-shadow:0 1px 2px rgba(0,0,0,.35);font-family:'Liberation Sans',sans-serif">
<div class="t" style="left:6.3px;top:8.4px;font-size:16.5px;color:#fff;letter-spacing:-0.291px">NZDUSD</div>
<div style="position:absolute;left:108.5px;top:5.8px;width:72.5px;height:21.7px;background:#0f1b3b;border-radius:4px"></div>
<div style="position:absolute;left:240.3px;top:6.3px;width:17.7px;height:17.7px;background:#f7b92e;border-radius:4px"><svg style="position:absolute;left:0;top:0" width="17.7" height="17.7" viewBox="0 0 17.7 17.7"><rect x="3.6" y="3.8" width="10.5" height="10.2" rx="1.6" fill="#fff" opacity=".55"/><rect x="3.6" y="3.8" width="4.7" height="4.6" rx="1.3" fill="#fff"/><rect x="9.4" y="3.8" width="4.7" height="4.6" rx="1.3" fill="#fff"/><rect x="3.6" y="9.4" width="4.7" height="4.6" rx="1.3" fill="#fff"/><rect x="9.4" y="9.4" width="4.7" height="4.6" rx="1.3" fill="#fff"/><circle cx="8.85" cy="8.9" r="1.1" fill="#f7b92e"/></svg></div>
<div class="t" style="left:6.5px;top:41.4px;font-size:11px;color:#fff;-webkit-text-stroke:0.35px #fff;letter-spacing:0.15px">Lots:</div>
<div style="position:absolute;left:53.5px;top:34.6px;width:43.0px;height:22.3px;background:#0f1b3b;border-radius:4px 0 0 4px"></div>
<div class="t" style="left:56.7px;top:41.4px;font-size:11px;color:#fff;-webkit-text-stroke:0.35px #fff;letter-spacing:0.15px">0.01</div>
<div style="position:absolute;left:97.1px;top:36.3px;width:10.4px;height:8.8px;background:#2c3f70;border-radius:3.5px 3.5px 0 0"><svg style="position:absolute;left:0;top:0" width="10.4" height="8.8" viewBox="0 0 10.4 8.8"><path d="M1 7.6 L3.9 4.2 L6.8 7.6 Z" fill="#f4f6fb"/></svg></div>
<div style="position:absolute;left:97.1px;top:47.0px;width:10.4px;height:8.8px;background:#2c3f70;border-radius:0 0 3.5px 3.5px"><svg style="position:absolute;left:0;top:0" width="10.4" height="8.8" viewBox="0 0 10.4 8.8"><path d="M1 1.3 L3.9 4.7 L6.8 1.3 Z" fill="#f4f6fb"/></svg></div>
<div class="t" style="left:6.5px;top:66.0px;font-size:11px;color:#fff;-webkit-text-stroke:0.35px #fff;letter-spacing:0.15px">S/L:</div>
<div style="position:absolute;left:53.5px;top:59.2px;width:43.0px;height:22.3px;background:#0f1b3b;border-radius:4px 0 0 4px"></div>
<div class="t" style="left:56.7px;top:66.0px;font-size:11px;color:#fff;-webkit-text-stroke:0.35px #fff;letter-spacing:0.15px">0</div>
<div style="position:absolute;left:97.1px;top:60.9px;width:10.4px;height:8.8px;background:#2c3f70;border-radius:3.5px 3.5px 0 0"><svg style="position:absolute;left:0;top:0" width="10.4" height="8.8" viewBox="0 0 10.4 8.8"><path d="M1 7.6 L3.9 4.2 L6.8 7.6 Z" fill="#f4f6fb"/></svg></div>
<div style="position:absolute;left:97.1px;top:71.6px;width:10.4px;height:8.8px;background:#2c3f70;border-radius:0 0 3.5px 3.5px"><svg style="position:absolute;left:0;top:0" width="10.4" height="8.8" viewBox="0 0 10.4 8.8"><path d="M1 1.3 L3.9 4.7 L6.8 1.3 Z" fill="#f4f6fb"/></svg></div>
<div class="t" style="left:151.0px;top:41.4px;font-size:11px;color:#fff;-webkit-text-stroke:0.35px #fff;letter-spacing:0.15px">T/S:</div>
<div style="position:absolute;left:176.9px;top:34.6px;width:43.0px;height:22.3px;background:#0f1b3b;border-radius:4px 0 0 4px"></div>
<div class="t" style="left:180.1px;top:41.4px;font-size:11px;color:#fff;-webkit-text-stroke:0.35px #fff;letter-spacing:0.15px">0</div>
<div style="position:absolute;left:220.5px;top:36.3px;width:10.4px;height:8.8px;background:#2c3f70;border-radius:3.5px 3.5px 0 0"><svg style="position:absolute;left:0;top:0" width="10.4" height="8.8" viewBox="0 0 10.4 8.8"><path d="M1 7.6 L3.9 4.2 L6.8 7.6 Z" fill="#f4f6fb"/></svg></div>
<div style="position:absolute;left:220.5px;top:47.0px;width:10.4px;height:8.8px;background:#2c3f70;border-radius:0 0 3.5px 3.5px"><svg style="position:absolute;left:0;top:0" width="10.4" height="8.8" viewBox="0 0 10.4 8.8"><path d="M1 1.3 L3.9 4.7 L6.8 1.3 Z" fill="#f4f6fb"/></svg></div>
<div class="t" style="left:151.0px;top:66.0px;font-size:11px;color:#fff;-webkit-text-stroke:0.35px #fff;letter-spacing:0.15px">T/P:</div>
<div style="position:absolute;left:176.9px;top:59.2px;width:43.0px;height:22.3px;background:#0f1b3b;border-radius:4px 0 0 4px"></div>
<div class="t" style="left:180.1px;top:66.0px;font-size:11px;color:#fff;-webkit-text-stroke:0.35px #fff;letter-spacing:0.15px">0</div>
<div style="position:absolute;left:220.5px;top:60.9px;width:10.4px;height:8.8px;background:#2c3f70;border-radius:3.5px 3.5px 0 0"><svg style="position:absolute;left:0;top:0" width="10.4" height="8.8" viewBox="0 0 10.4 8.8"><path d="M1 7.6 L3.9 4.2 L6.8 7.6 Z" fill="#f4f6fb"/></svg></div>
<div style="position:absolute;left:220.5px;top:71.6px;width:10.4px;height:8.8px;background:#2c3f70;border-radius:0 0 3.5px 3.5px"><svg style="position:absolute;left:0;top:0" width="10.4" height="8.8" viewBox="0 0 10.4 8.8"><path d="M1 1.3 L3.9 4.7 L6.8 1.3 Z" fill="#f4f6fb"/></svg></div>
<svg style="position:absolute;left:-1.5px;top:-1.5px" width="268" height="161.5" viewBox="0 0 268 161.5"><path d="M9.5 90 H125 a5 5 0 0 1 5 5 V128 a5 5 0 0 1 -5 5 H87 a5 5 0 0 0 -5 5 V152.5 a5 5 0 0 1 -5 5 H9.5 a5 5 0 0 1 -5 -5 V95 a5 5 0 0 1 5 -5 Z" fill="#2f4272" stroke="#3c4f7e" stroke-width="1"/><path d="M141.5 90 H257 a5 5 0 0 1 5 5 V152.5 a5 5 0 0 1 -5 5 H189 a5 5 0 0 1 -5 -5 V138 a5 5 0 0 0 -5 -5 H141.5 a5 5 0 0 1 -5 -5 V95 a5 5 0 0 1 5 -5 Z" fill="#2f4272" stroke="#3c4f7e" stroke-width="1"/></svg>
<div style="position:absolute;left:83.7px;top:135.7px;width:94.8px;height:19.3px;background:#0f1b3b;border-radius:4px"></div>
<div class="t" style="left:83.7px;top:140.3px;width:94.8px;text-align:center;font-size:13.5px;letter-spacing:0.4px;color:#fff">1.9</div>
<div class="t" style="left:27.1px;top:95.2px;line-height:28px;font-size:24.5px;color:#e81c25;letter-spacing:0px"><span style="font-size:13.5px;letter-spacing:-0.75px">0.60</span><span style="margin-left:0.6px">31</span><span style="font-size:13.5px;margin-left:0.3px">3</span></div>
<svg style="position:absolute;left:89.6px;top:103.4px" width="16.3" height="16.8" viewBox="0 0 16.3 16.8"><path d="M3.9 0 H12.4 V6.2 H16.3 L8.15 16.8 L0 6.2 H3.9 Z" fill="#e81c25"/></svg>
<svg style="position:absolute;left:157.0px;top:103.4px" width="16.3" height="16.8" viewBox="0 0 16.3 16.8"><path d="M3.9 0 H12.4 V6.2 H16.3 L8.15 16.8 L0 6.2 H3.9 Z" fill="#e81c25"/></svg>
<div class="t" style="left:178.3px;top:95.2px;line-height:28px;font-size:24.5px;color:#e81c25;letter-spacing:0px"><span style="font-size:13.5px;letter-spacing:-0.75px">0.60</span><span style="margin-left:0.6px">33</span><span style="font-size:13.5px;margin-left:0.3px">2</span></div>
<div class="t" style="left:30.3px;top:138.1px;font-size:14.5px;color:#e81c25;-webkit-text-stroke:0.45px #e81c25;letter-spacing:-0.4px">Sell</div>
<div class="t" style="left:210.5px;top:138.1px;font-size:14.5px;color:#e81c25;-webkit-text-stroke:0.45px #e81c25;letter-spacing:-0.1px">Buy</div>
</div>
</div>
</body></html>
